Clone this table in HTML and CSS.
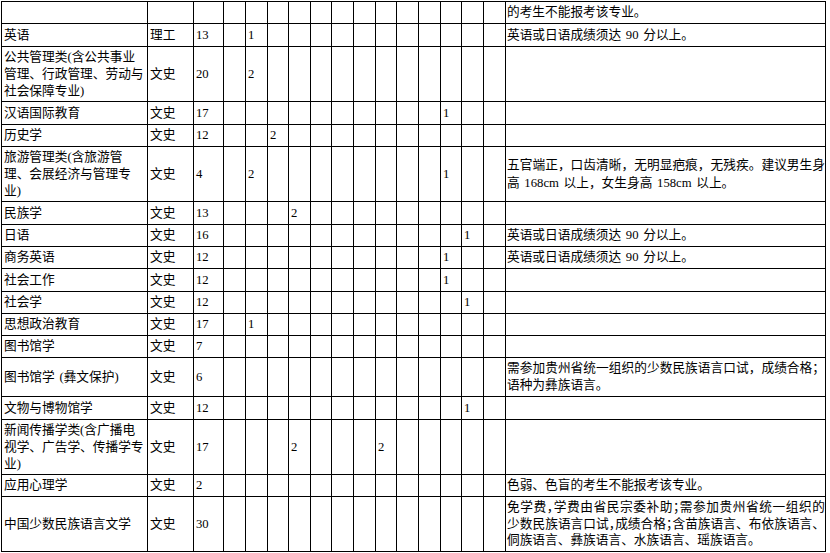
FILE: index.html
```html
<!DOCTYPE html>
<html lang="zh-CN">
<head>
<meta charset="utf-8">
<title>招生计划</title>
<link rel="stylesheet" href="styles.css">
</head>
<body>
<table class="plan">
<colgroup>
<col class="c-name"><col class="c-type"><col class="c-num">
<col class="c-n22"><col class="c-n22"><col class="c-n21"><col class="c-n22"><col class="c-n21"><col class="c-n22"><col class="c-n22"><col class="c-n21"><col class="c-n22"><col class="c-n22"><col class="c-n21"><col class="c-n22"><col class="c-n22">
<col class="c-note">
</colgroup>
<tbody>
<tr class="h22"><td></td><td></td><td></td><td></td><td></td><td></td><td></td><td></td><td></td><td></td><td></td><td></td><td></td><td></td><td></td><td></td><td class="note">的考生不能报考该专业。</td></tr>
<tr class="h23"><td>英语</td><td>理工</td><td>13</td><td></td><td>1</td><td></td><td></td><td></td><td></td><td></td><td></td><td></td><td></td><td></td><td></td><td></td><td class="note">英语或日语成绩须达 90 分以上。</td></tr>
<tr class="h55"><td class="multi">公共管理类(含公共事业<br>管理、行政管理、劳动与<br>社会保障专业)</td><td>文史</td><td>20</td><td></td><td>2</td><td></td><td></td><td></td><td></td><td></td><td></td><td></td><td></td><td></td><td></td><td></td><td class="note"></td></tr>
<tr class="h23"><td>汉语国际教育</td><td>文史</td><td>17</td><td></td><td></td><td></td><td></td><td></td><td></td><td></td><td></td><td></td><td></td><td>1</td><td></td><td></td><td class="note"></td></tr>
<tr class="h22"><td>历史学</td><td>文史</td><td>12</td><td></td><td></td><td>2</td><td></td><td></td><td></td><td></td><td></td><td></td><td></td><td></td><td></td><td></td><td class="note"></td></tr>
<tr class="h55"><td class="multi">旅游管理类(含旅游管<br>理、会展经济与管理专<br>业)</td><td>文史</td><td>4</td><td></td><td>2</td><td></td><td></td><td></td><td></td><td></td><td></td><td></td><td></td><td>1</td><td></td><td></td><td class="note wide"><span class="ln j">五官端正，口齿清晰，无明显疤痕，无残疾。建议男生身</span><span class="ln">高 168cm 以上，女生身高 158cm 以上。</span></td></tr>
<tr class="h23"><td>民族学</td><td>文史</td><td>13</td><td></td><td></td><td></td><td>2</td><td></td><td></td><td></td><td></td><td></td><td></td><td></td><td></td><td></td><td class="note"></td></tr>
<tr class="h22"><td>日语</td><td>文史</td><td>16</td><td></td><td></td><td></td><td></td><td></td><td></td><td></td><td></td><td></td><td></td><td></td><td>1</td><td></td><td class="note">英语或日语成绩须达 90 分以上。</td></tr>
<tr class="h22"><td>商务英语</td><td>文史</td><td>12</td><td></td><td></td><td></td><td></td><td></td><td></td><td></td><td></td><td></td><td></td><td>1</td><td></td><td></td><td class="note">英语或日语成绩须达 90 分以上。</td></tr>
<tr class="h23"><td>社会工作</td><td>文史</td><td>12</td><td></td><td></td><td></td><td></td><td></td><td></td><td></td><td></td><td></td><td></td><td>1</td><td></td><td></td><td class="note"></td></tr>
<tr class="h22"><td>社会学</td><td>文史</td><td>12</td><td></td><td></td><td></td><td></td><td></td><td></td><td></td><td></td><td></td><td></td><td></td><td>1</td><td></td><td class="note"></td></tr>
<tr class="h22"><td>思想政治教育</td><td>文史</td><td>17</td><td></td><td>1</td><td></td><td></td><td></td><td></td><td></td><td></td><td></td><td></td><td></td><td></td><td></td><td class="note"></td></tr>
<tr class="h22"><td>图书馆学</td><td>文史</td><td>7</td><td></td><td></td><td></td><td></td><td></td><td></td><td></td><td></td><td></td><td></td><td></td><td></td><td></td><td class="note"></td></tr>
<tr class="h39"><td>图书馆学 (彝文保护)</td><td>文史</td><td>6</td><td></td><td></td><td></td><td></td><td></td><td></td><td></td><td></td><td></td><td></td><td></td><td></td><td></td><td class="note"><span class="ln j">需参加贵州省统一组织的少数民族语言口试，成绩合格；</span><span class="ln">语种为彝族语言。</span></td></tr>
<tr class="h23"><td>文物与博物馆学</td><td>文史</td><td>12</td><td></td><td></td><td></td><td></td><td></td><td></td><td></td><td></td><td></td><td></td><td></td><td>1</td><td></td><td class="note"></td></tr>
<tr class="h55"><td class="multi">新闻传播学类(含广播电<br>视学、广告学、传播学专<br>业)</td><td>文史</td><td>17</td><td></td><td></td><td></td><td>2</td><td></td><td></td><td></td><td>2</td><td></td><td></td><td></td><td></td><td></td><td class="note"></td></tr>
<tr class="h22"><td>应用心理学</td><td>文史</td><td>2</td><td></td><td></td><td></td><td></td><td></td><td></td><td></td><td></td><td></td><td></td><td></td><td></td><td></td><td class="note">色弱、色盲的考生不能报考该专业。</td></tr>
<tr class="h55"><td>中国少数民族语言文学</td><td>文史</td><td>30</td><td></td><td></td><td></td><td></td><td></td><td></td><td></td><td></td><td></td><td></td><td></td><td></td><td></td><td class="note"><span class="ln j">免学费<span class="hw">，</span>学费由省民宗委补助<span class="hw">；</span>需参加贵州省统一组织的</span><span class="ln j">少数民族语言口试<span class="hw">，</span>成绩合格<span class="hw">；</span>含苗族语言、布依族语言、</span><span class="ln">侗族语言、彝族语言、水族语言、瑶族语言。</span></td></tr>
</tbody>
</table>
</body>
</html>
```

FILE: styles.css
```css
html, body {
  margin: 0;
  padding: 0;
  background: #ffffff;
}

.plan {
  border-collapse: collapse;
  table-layout: fixed;
  width: 825px;
  margin: 1px 0 0 1px;
  font-family: "Liberation Serif", "Noto Sans CJK SC", serif;
  font-size: 12.7px;
  font-weight: 400;
  color: #000000;
}

.c-name { width: 146px; }
.c-type { width: 46px; }
.c-num { width: 30px; }
.c-n22 { width: 22px; }
.c-n21 { width: 21px; }
.c-note { width: 320px; }

.plan td {
  border: 1px solid #000000;
  padding: 0 1px 0 2px;
  vertical-align: middle;
  line-height: 17px;
  white-space: nowrap;
  overflow: hidden;
  text-align: left;
  word-spacing: 1.5px;
}

.h22 { height: 22px; }
.h23 { height: 23px; }
.h39 { height: 39px; }
.h55 { height: 55px; }

.plan td.multi {
  line-height: 17px;
}

.plan td.note {
  padding-left: 1px;
  padding-right: 0;
  line-height: 16.8px;
}

.plan td.note.wide {
  line-height: 18.5px;
}

.ln {
  display: block;
}

.ln.j {
  text-align: justify;
  text-align-last: justify;
}

.hw {
  font-feature-settings: "halt" 1;
}
```
